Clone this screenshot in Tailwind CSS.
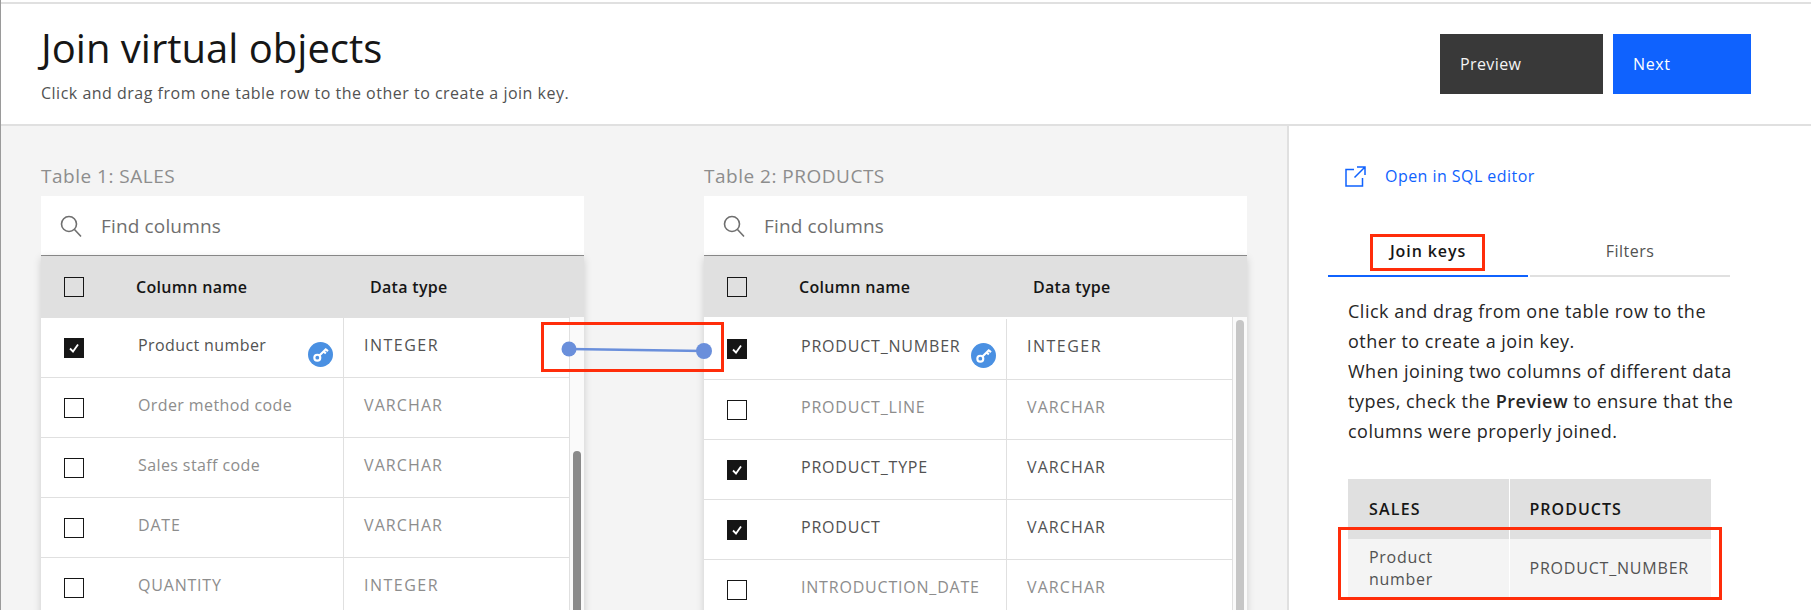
<!DOCTYPE html>
<html lang="en">
<head>
    <meta charset="UTF-8">
    <title>Join virtual objects</title>
    <script src="https://cdn.jsdelivr.net/npm/@tailwindcss/browser@4"></script>
</head>
<body class="h-[610px] overflow-hidden bg-white font-['Open_Sans',sans-serif]">
<div class="relative h-[610px] overflow-hidden border-l border-[#9a9a9a]">
    <!-- header -->
    <header class="mt-[2px] flex h-[124px] justify-between border-y-2 border-[#e0e0e0] pl-[40px] pr-[60px]">
        <div>
            <h1 class="mt-[20px] text-[40px] leading-[48px] font-normal text-[#161616]">Join virtual objects</h1>
            <p class="mt-[11px] text-[16px] leading-[20px] tracking-[0.5px] text-[#525252]">Click and drag from one table row to the other to create a join key.</p>
        </div>
        <div class="mt-[30px] flex gap-[10px]">
            <button class="h-[60px] w-[163px] bg-[#393939] pl-[20px] text-left text-[16px] tracking-[0.4px] text-[#f4f4f4]">Preview</button>
            <button class="h-[60px] w-[138px] bg-[#0f62fe] pl-[20px] text-left text-[16px] tracking-[0.6px] text-white">Next</button>
        </div>
    </header>

    <div class="flex h-[484px]">
        <!-- tables -->
        <main class="flex w-[1286px] gap-[120px] bg-[#f4f4f4] pl-[40px] pt-[38px]">
            <section class="w-[543px]">
                <h2 class="text-[19px] leading-[24px] tracking-[0.5px] text-[#8d8d8d]">Table 1: SALES</h2>
                <div class="mt-[8px] flex h-[60px] items-center border-b border-[#8d8d8d] bg-white pl-[18px]">
                    <svg class="h-[24px] w-[24px]" viewBox="0 0 24 24" fill="none" stroke="#6f6f6f" stroke-width="1.6"><circle cx="10" cy="10" r="7.5"/><path d="M15.5 15.5 L22 22.5"/></svg>
                    <span class="ml-[18px] pt-[1px] text-[19px] tracking-[0.15px] text-[#6f6f6f]">Find columns</span>
                </div>
                <div class="shadow-[0_2px_8px_rgba(0,0,0,0.16)]">
                    <div class="flex h-[61px] items-center bg-[#e0e0e0] text-[16px] font-semibold tracking-[0.3px] text-[#161616]">
                        <span class="ml-[23px] h-[20px] w-[20px] border border-[#161616]"></span>
                        <span class="ml-[52px] w-[234px]">Column name</span>
                        <span>Data type</span>
                    </div>
                    <div class="relative bg-white">
                        <div class="flex h-[60px] w-[528px] items-center border-t border-[#e0e0e0] text-[16px] tracking-[0.4px] text-[#525252]">
                            <span class="ml-[23px] flex h-[20px] w-[20px] items-center justify-center bg-[#161616]"><svg class="h-[12px] w-[12px]" viewBox="0 0 12 12" fill="none" stroke="white" stroke-width="1.8"><path d="M2 6.5 L5 9.5 L10 2.5"/></svg></span>
                            <span class="relative ml-[54px] flex h-full w-[206px] items-center border-r border-[#e0e0e0] pb-[6px]">Product number
                                <span class="absolute left-[170px] top-[24px] flex h-[25px] w-[25px] items-center justify-center rounded-full bg-[#4a90e2]"><svg class="h-[17px] w-[17px]" viewBox="0 0 16 16" fill="none" stroke="white" stroke-width="2"><circle cx="5" cy="11" r="2.8"/><path d="M7 9 L13.5 2.5 M11 5 L13 7 M13 3 L15 5"/></svg></span>
                            </span>
                            <span class="ml-[20px] pb-[6px] tracking-[1.5px]">INTEGER</span>
                        </div>
                        <div class="flex h-[60px] w-[528px] items-center border-t border-[#e0e0e0] text-[16px] tracking-[0.4px] text-[#8d8d8d]">
                            <span class="ml-[23px] h-[20px] w-[20px] border border-[#161616]"></span>
                            <span class="ml-[54px] flex h-full w-[206px] items-center border-r border-[#e0e0e0] pb-[6px]">Order method code</span>
                            <span class="ml-[20px] pb-[6px] tracking-[1.1px]">VARCHAR</span>
                        </div>
                        <div class="flex h-[60px] w-[528px] items-center border-t border-[#e0e0e0] text-[16px] tracking-[0.4px] text-[#8d8d8d]">
                            <span class="ml-[23px] h-[20px] w-[20px] border border-[#161616]"></span>
                            <span class="ml-[54px] flex h-full w-[206px] items-center border-r border-[#e0e0e0] pb-[6px]">Sales staff code</span>
                            <span class="ml-[20px] pb-[6px] tracking-[1.1px]">VARCHAR</span>
                        </div>
                        <div class="flex h-[60px] w-[528px] items-center border-t border-[#e0e0e0] text-[16px] tracking-[0.8px] text-[#8d8d8d]">
                            <span class="ml-[23px] h-[20px] w-[20px] border border-[#161616]"></span>
                            <span class="ml-[54px] flex h-full w-[206px] items-center border-r border-[#e0e0e0] pb-[6px]">DATE</span>
                            <span class="ml-[20px] pb-[6px] tracking-[1.1px]">VARCHAR</span>
                        </div>
                        <div class="flex h-[60px] w-[528px] items-center border-t border-[#e0e0e0] text-[16px] tracking-[0.8px] text-[#8d8d8d]">
                            <span class="ml-[23px] h-[20px] w-[20px] border border-[#161616]"></span>
                            <span class="ml-[54px] flex h-full w-[206px] items-center border-r border-[#e0e0e0] pb-[6px]">QUANTITY</span>
                            <span class="ml-[20px] pb-[6px] tracking-[1.5px]">INTEGER</span>
                        </div>
                        <!-- scrollbar -->
                        <div class="absolute right-0 top-0 h-full w-[15px] border-l border-[#e0e0e0] bg-[#fafafa]"></div>
                        <div class="absolute right-[3px] top-[134px] h-[200px] w-[8px] rounded-[4px] bg-[#8a8a8a]"></div>
                    </div>
                </div>
            </section>

            <section class="w-[543px]">
                <h2 class="text-[19px] leading-[24px] tracking-[0.5px] text-[#8d8d8d]">Table 2: PRODUCTS</h2>
                <div class="mt-[8px] flex h-[60px] items-center border-b border-[#8d8d8d] bg-white pl-[18px]">
                    <svg class="h-[24px] w-[24px]" viewBox="0 0 24 24" fill="none" stroke="#6f6f6f" stroke-width="1.6"><circle cx="10" cy="10" r="7.5"/><path d="M15.5 15.5 L22 22.5"/></svg>
                    <span class="ml-[18px] pt-[1px] text-[19px] tracking-[0.15px] text-[#6f6f6f]">Find columns</span>
                </div>
                <div class="shadow-[0_2px_8px_rgba(0,0,0,0.16)]">
                    <div class="flex h-[61px] items-center bg-[#e0e0e0] text-[16px] font-semibold tracking-[0.3px] text-[#161616]">
                        <span class="ml-[23px] h-[20px] w-[20px] border border-[#161616]"></span>
                        <span class="ml-[52px] w-[234px]">Column name</span>
                        <span>Data type</span>
                    </div>
                    <div class="relative bg-white pt-[2px]">
                        <div class="flex h-[60px] w-[528px] items-center text-[16px] tracking-[0.8px] text-[#525252]">
                            <span class="ml-[23px] flex h-[20px] w-[20px] items-center justify-center bg-[#161616]"><svg class="h-[12px] w-[12px]" viewBox="0 0 12 12" fill="none" stroke="white" stroke-width="1.8"><path d="M2 6.5 L5 9.5 L10 2.5"/></svg></span>
                            <span class="relative ml-[54px] flex h-full w-[206px] items-center border-r border-[#e0e0e0] pb-[6px]">PRODUCT_NUMBER
                                <span class="absolute left-[170px] top-[24px] flex h-[25px] w-[25px] items-center justify-center rounded-full bg-[#4a90e2]"><svg class="h-[17px] w-[17px]" viewBox="0 0 16 16" fill="none" stroke="white" stroke-width="2"><circle cx="5" cy="11" r="2.8"/><path d="M7 9 L13.5 2.5 M11 5 L13 7 M13 3 L15 5"/></svg></span>
                            </span>
                            <span class="ml-[20px] pb-[6px] tracking-[1.5px]">INTEGER</span>
                        </div>
                        <div class="flex h-[60px] w-[528px] items-center border-t border-[#e0e0e0] text-[16px] tracking-[0.8px] text-[#8d8d8d]">
                            <span class="ml-[23px] h-[20px] w-[20px] border border-[#161616]"></span>
                            <span class="ml-[54px] flex h-full w-[206px] items-center border-r border-[#e0e0e0] pb-[6px]">PRODUCT_LINE</span>
                            <span class="ml-[20px] pb-[6px] tracking-[1.1px]">VARCHAR</span>
                        </div>
                        <div class="flex h-[60px] w-[528px] items-center border-t border-[#e0e0e0] text-[16px] tracking-[0.8px] text-[#525252]">
                            <span class="ml-[23px] flex h-[20px] w-[20px] items-center justify-center bg-[#161616]"><svg class="h-[12px] w-[12px]" viewBox="0 0 12 12" fill="none" stroke="white" stroke-width="1.8"><path d="M2 6.5 L5 9.5 L10 2.5"/></svg></span>
                            <span class="ml-[54px] flex h-full w-[206px] items-center border-r border-[#e0e0e0] pb-[6px]">PRODUCT_TYPE</span>
                            <span class="ml-[20px] pb-[6px] tracking-[1.1px]">VARCHAR</span>
                        </div>
                        <div class="flex h-[60px] w-[528px] items-center border-t border-[#e0e0e0] text-[16px] tracking-[0.8px] text-[#525252]">
                            <span class="ml-[23px] flex h-[20px] w-[20px] items-center justify-center bg-[#161616]"><svg class="h-[12px] w-[12px]" viewBox="0 0 12 12" fill="none" stroke="white" stroke-width="1.8"><path d="M2 6.5 L5 9.5 L10 2.5"/></svg></span>
                            <span class="ml-[54px] flex h-full w-[206px] items-center border-r border-[#e0e0e0] pb-[6px]">PRODUCT</span>
                            <span class="ml-[20px] pb-[6px] tracking-[1.1px]">VARCHAR</span>
                        </div>
                        <div class="flex h-[60px] w-[528px] items-center border-t border-[#e0e0e0] text-[16px] tracking-[0.8px] text-[#8d8d8d]">
                            <span class="ml-[23px] h-[20px] w-[20px] border border-[#161616]"></span>
                            <span class="ml-[54px] flex h-full w-[206px] items-center border-r border-[#e0e0e0] pb-[6px]">INTRODUCTION_DATE</span>
                            <span class="ml-[20px] pb-[6px] tracking-[1.1px]">VARCHAR</span>
                        </div>
                        <!-- scrollbar -->
                        <div class="absolute right-0 top-0 h-full w-[15px] border-l border-[#e0e0e0] bg-[#fafafa]"></div>
                        <div class="absolute right-[3px] top-[3px] h-[300px] w-[8px] rounded-[4px] bg-[#c6c6c6]"></div>
                    </div>
                </div>
            </section>
        </main>

        <!-- side panel -->
        <aside class="flex-1 border-l-2 border-[#e0e0e0] bg-white">
            <a class="ml-[56px] mt-[38px] flex items-center text-[16px] tracking-[0.45px] text-[#0f62fe]">
                <svg class="h-[21px] w-[21px]" viewBox="0 0 21 21" fill="none" stroke="#0f62fe" stroke-width="1.5"><path d="M9 3.5 H1 V20 H17.5 V12 M12 1 H20 V9 M20 1 L9.5 11.5"/></svg>
                <span class="ml-[19px]">Open in SQL editor</span>
            </a>
            <div class="ml-[39px] mt-[50px] flex w-[402px] gap-[2px] text-[16px]">
                <div class="h-[39px] w-[200px] border-b-2 border-[#0f62fe] pb-[8px] pt-[1px] text-center font-semibold tracking-[0.9px] text-[#161616]">Join keys</div>
                <div class="h-[39px] w-[200px] border-b-2 border-[#e0e0e0] pb-[8px] pt-[1px] text-center tracking-[0.5px] text-[#525252]">Filters</div>
            </div>
            <p class="ml-[59px] mt-[19px] w-[395px] text-[18px] leading-[30px] tracking-[0.5px] text-[#262626]">Click and drag from one table row to the other to create a join key.<br>When joining two columns of different data types, check the <b class="font-semibold">Preview</b> to ensure that the columns were properly joined.</p>
            <table class="ml-[59px] mt-[33px] w-[363px] table-fixed text-[16px]">
                <thead>
                    <tr class="h-[60px] bg-[#e0e0e0] text-left font-semibold text-[#161616]">
                        <th class="w-[161px] border-r border-white pl-[21px] font-semibold tracking-[1.2px]">SALES</th>
                        <th class="pl-[20px] font-semibold tracking-[1px]">PRODUCTS</th>
                    </tr>
                </thead>
                <tbody>
                    <tr class="h-[58px] bg-[#f4f4f4] text-[#525252]">
                        <td class="border-r border-white pl-[21px] leading-[22px] tracking-[0.7px]">Product<br>number</td>
                        <td class="pl-[20px] tracking-[0.8px]">PRODUCT_NUMBER</td>
                    </tr>
                </tbody>
            </table>
        </aside>
    </div>

    <!-- join line between the two tables -->
    <svg class="absolute left-[555px] top-[335px] h-[30px] w-[165px]" viewBox="0 0 165 30">
        <path d="M13 14 L148 16" stroke="#6a8fdb" stroke-width="2.5"/>
        <circle cx="13" cy="14" r="7.5" fill="#6a8fdb"/>
        <circle cx="148" cy="16" r="8" fill="#6a8fdb"/>
    </svg>

    <!-- red callouts -->
    <div class="absolute left-[540px] top-[322px] h-[50px] w-[183px] border-[3px] border-[#ff2d0a]"></div>
    <div class="absolute left-[1369px] top-[234px] h-[37px] w-[115px] border-[3px] border-[#ff2d0a]"></div>
    <div class="absolute left-[1337px] top-[527px] h-[73px] w-[384px] border-[3px] border-[#ff2d0a]"></div>
</div>
</body>
</html>
